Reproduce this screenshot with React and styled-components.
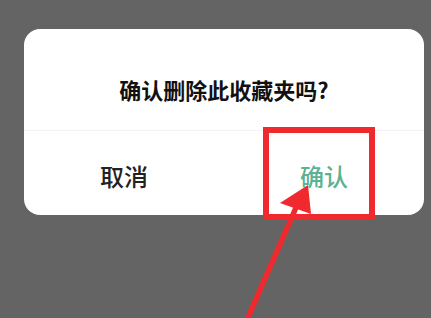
import React from "react";
import styled, { createGlobalStyle } from "styled-components";

const Global = createGlobalStyle`
  html, body { margin: 0; padding: 0; background: #646464; }
  body { font-family: "Noto Sans CJK SC", "Noto Sans", sans-serif; }
`;

const Screen = styled.div`
  position: relative;
  width: 431px;
  height: 318px;
  overflow: hidden;
  background: #646464;
  padding: 29px 0 0 24px;
  box-sizing: border-box;
`;

const Dialog = styled.div`
  width: 400px;
  height: 186px;
  background: #fff;
  border-radius: 16px;
  display: flex;
  flex-direction: column;
  overflow: hidden;
`;

const Title = styled.div`
  height: 101px;
  display: flex;
  align-items: center;
  justify-content: center;
  padding-top: 18px;
  box-sizing: border-box;
  font-size: 22px;
  font-weight: 700;
  color: #111;
`;

const Divider = styled.div`
  height: 1px;
  background: #f3f3f3;
`;

const Actions = styled.div`
  flex: 1;
  display: grid;
  grid-template-columns: 1fr 1fr;
`;

const Action = styled.div`
  display: flex;
  align-items: center;
  justify-content: center;
  padding-top: 4px;
  font-size: 24px;
  font-weight: 500;
  color: ${(p) => (p.$primary ? "#5bb192" : "#222")};
`;

const Highlight = styled.div`
  position: absolute;
  left: 263px;
  top: 127px;
  width: 112px;
  height: 93px;
  border: 6px solid #f0292e;
  box-sizing: border-box;
`;

const Arrow = styled.svg`
  position: absolute;
  left: 0;
  top: 0;
  pointer-events: none;
`;

export default function App() {
  return (
    <>
      <Global />
      <Screen>
        <Dialog>
          <Title>确认删除此收藏夹吗?</Title>
          <Divider />
          <Actions>
            <Action>取消</Action>
            <Action $primary>确认</Action>
          </Actions>
        </Dialog>
        <Highlight />
        <Arrow width="431" height="318" viewBox="0 0 431 318">
          <line x1="246" y1="322" x2="298" y2="203" stroke="#f0292e" strokeWidth="5.5" />
          <polygon points="308,185 280,203 311,214" fill="#f0292e" />
        </Arrow>
      </Screen>
    </>
  );
}
